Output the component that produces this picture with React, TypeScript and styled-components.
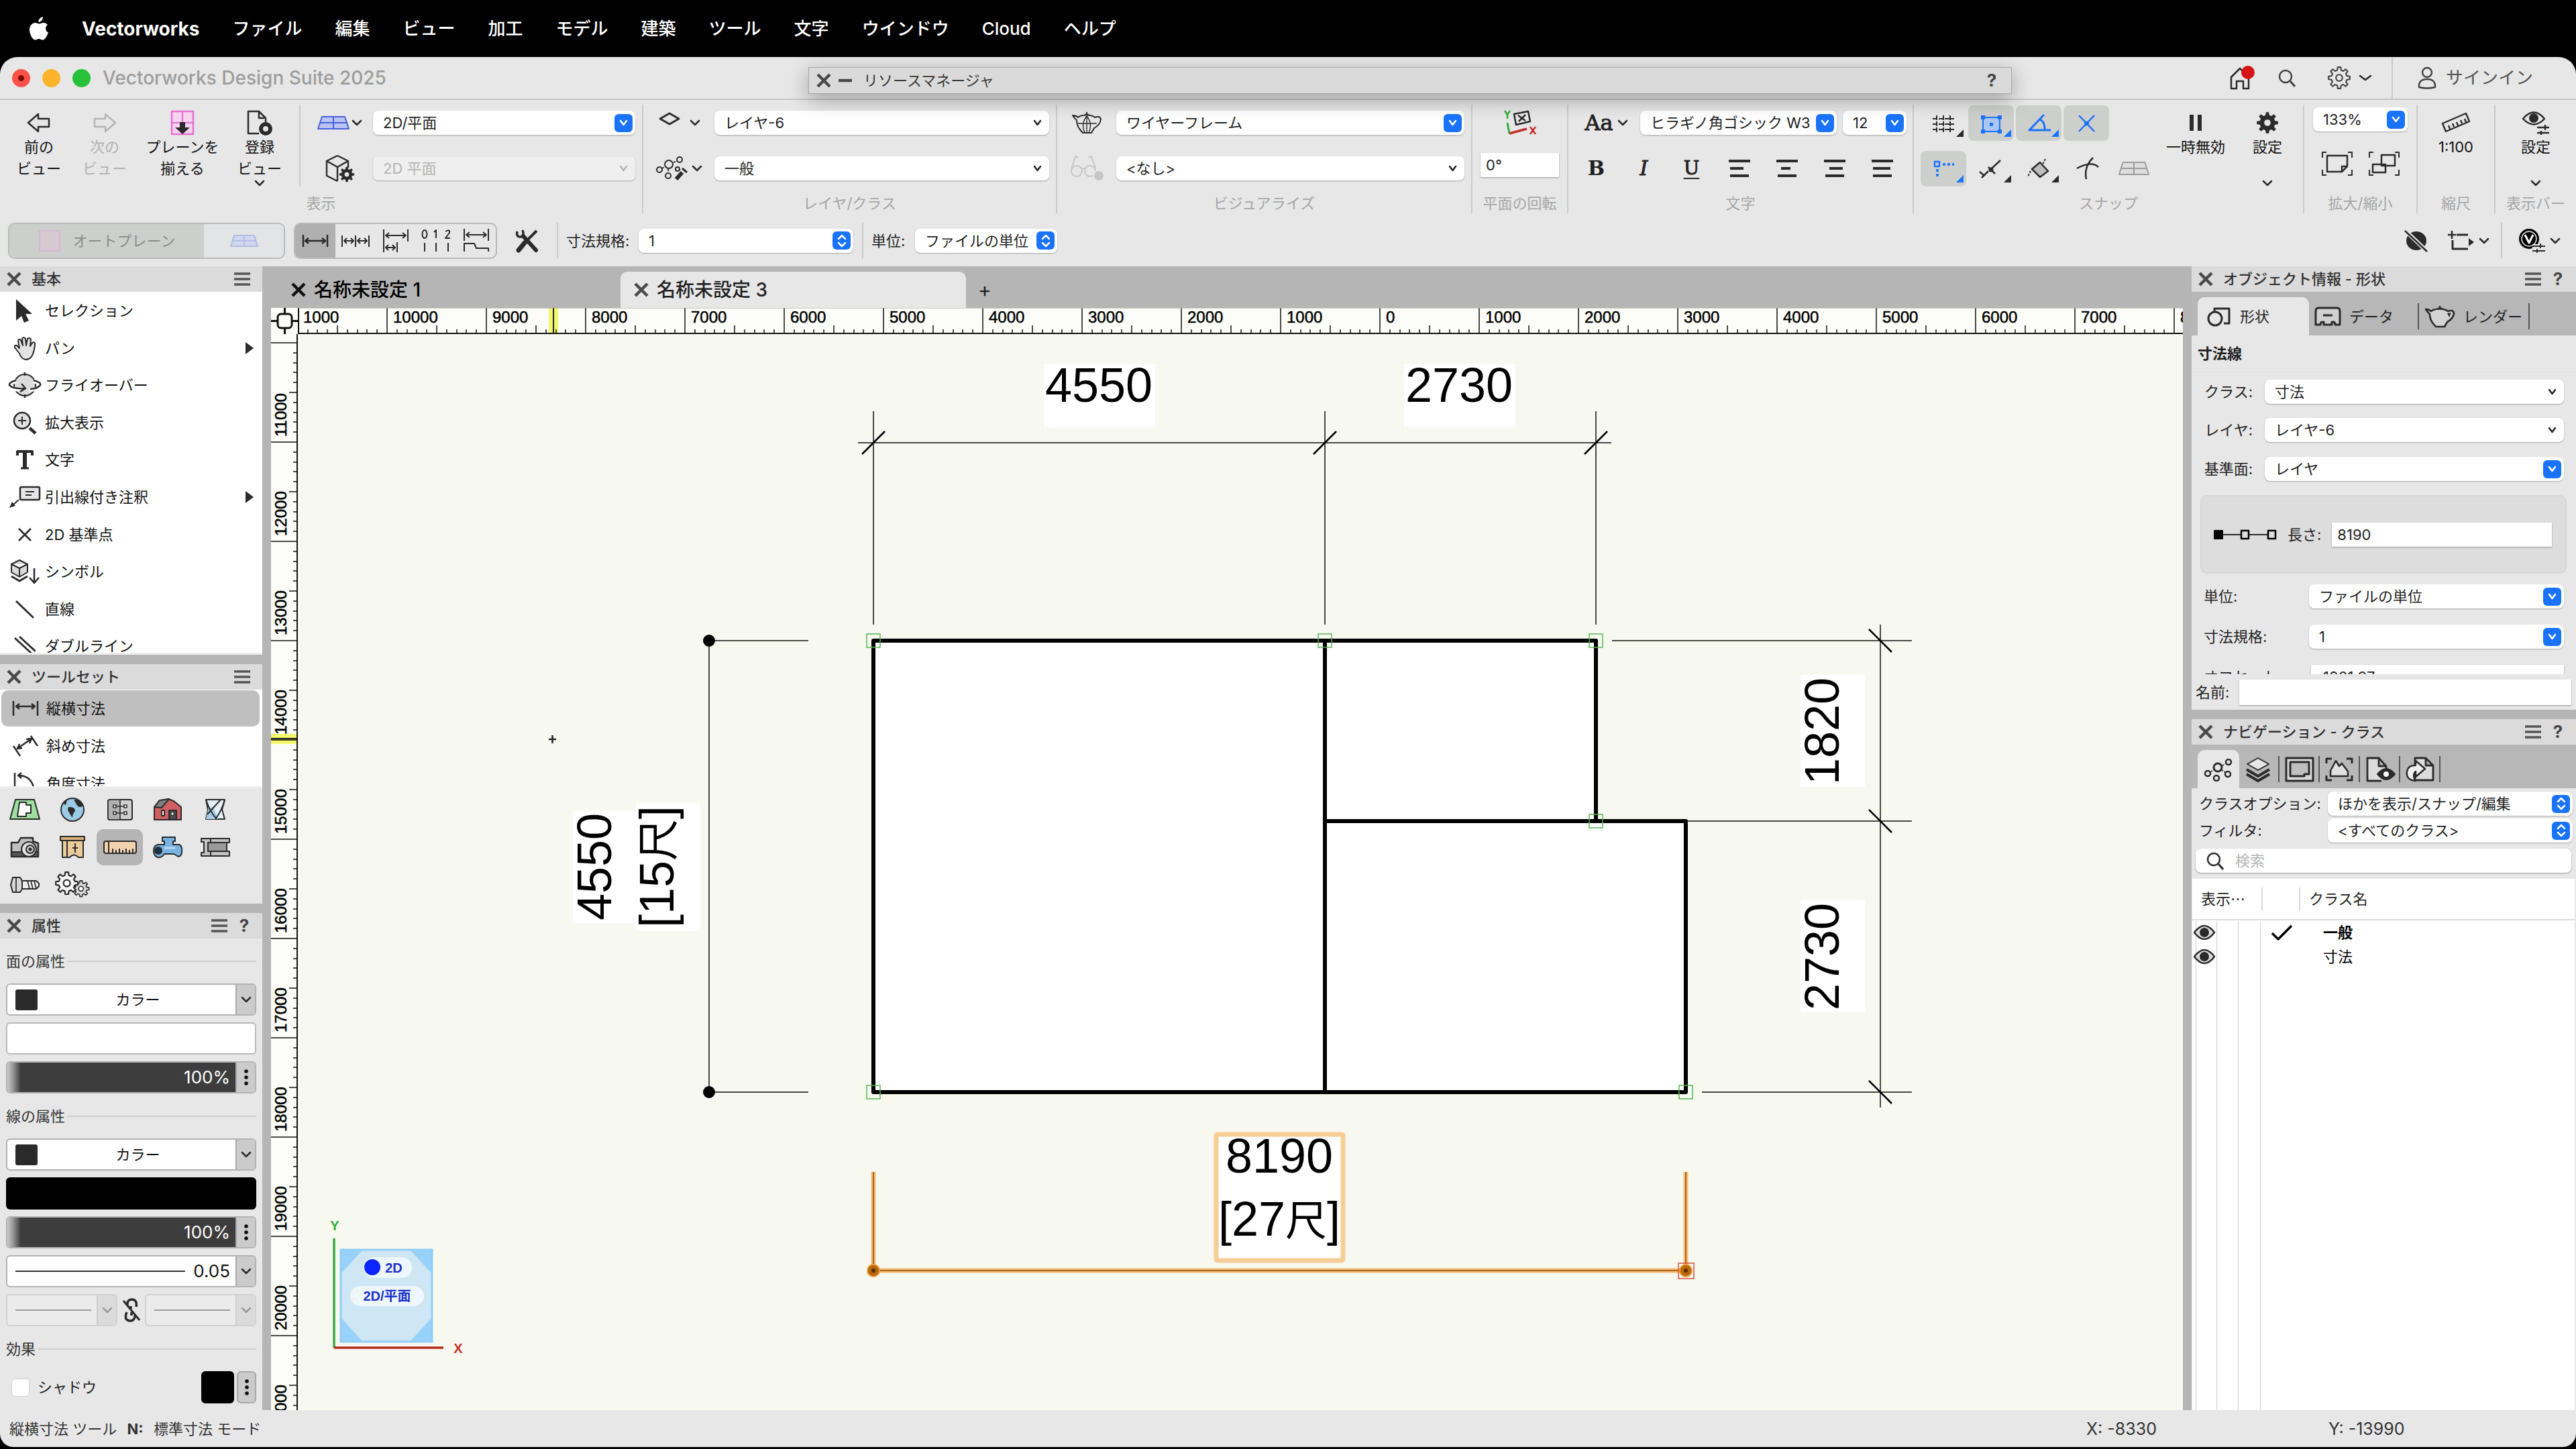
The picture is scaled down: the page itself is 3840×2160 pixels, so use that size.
import React from "react";
import styled, { createGlobalStyle, css } from "styled-components";

const INK = "#2b2b2b";
const BLUE = "#1a73ff";
const SANS = `Inter, "Noto Sans CJK JP", sans-serif`;

const Global = createGlobalStyle`
  *, *::before, *::after { box-sizing: border-box; }
  html, body, #root { height: 100%; }
  body { margin: 0; background: #000; font-family: ${SANS}; font-size: 22px; line-height: 32px; color: #1f1f1f; overflow: hidden; }
  button, input, select { font: inherit; color: inherit; margin: 0; padding: 0; border: 0; background: none; border-radius: 0; }
  ul, h2, h3 { margin: 0; padding: 0; list-style: none; font: inherit; }
`;

/* ---------- shared pieces ---------- */

const Svg = styled.svg`
  display: block;
  flex: none;
  fill: none;
  stroke: ${INK};
  stroke-width: 2;
  stroke-linejoin: round;
`;

type IcoProps = { w: number; h: number; children: React.ReactNode };
const Ico = ({ w, h, children }: IcoProps) => (
  <Svg width={w} height={h} viewBox={`0 0 ${w} ${h}`} aria-hidden="true">
    {children}
  </Svg>
);

const Chevron = ({ color = INK, w = 16 }: { color?: string; w?: number }) => (
  <Ico w={w} h={10}>
    <path d={`M2 2 L${w / 2} 8 L${w - 2} 2`} stroke={color} strokeWidth={2.5} strokeLinecap="round" />
  </Ico>
);

const CloseIcon = ({ color = "#4a4a4a" }: { color?: string }) => (
  <Ico w={22} h={22}>
    <path d="M2 2 L20 20 M20 2 L2 20" stroke={color} strokeWidth={4.5} />
  </Ico>
);

const MenuIcon = () => (
  <Ico w={24} h={22}>
    <path d="M0 3 H24 M0 11 H24 M0 19 H24" stroke="#555" strokeWidth={3.5} />
  </Ico>
);

const IconButton = styled.button<{ $w?: number; $tight?: boolean }>`
  display: flex;
  align-items: center;
  justify-content: center;
  gap: ${(p) => (p.$tight ? 2 : 6)}px;
  height: 100%;
  ${(p) => p.$tight && "padding-left: 8px;"}
  ${(p) => p.$w && `width: ${p.$w}px;`}
`;

type PickKind = "blue" | "updown" | "plain" | "off";

const PickBox = styled.span<{ $kind: PickKind; $w?: number }>`
  display: grid;
  align-items: center;
  ${(p) => (p.$w ? `flex: 0 0 ${p.$w}px;` : "flex: 1 1 0;")}
  min-width: 0;
  height: 36px;
  border-radius: 8px;
  background: ${(p) => (p.$kind === "off" ? "#eeefee" : "#fff")};
  color: ${(p) => (p.$kind === "off" ? "#b4b4b4" : "#1f1f1f")};
  box-shadow: 0 1px 2px rgba(0, 0, 0, 0.28);
  & > * { grid-area: 1 / 1; }
`;

const PickField = styled.select`
  appearance: none;
  width: 100%;
  height: 36px;
  padding: 0 32px 0 15px;
  opacity: 1;
  text-overflow: clip;
`;

const PickMark = styled.span<{ $blue: boolean }>`
  justify-self: end;
  display: flex;
  align-items: center;
  justify-content: center;
  width: 27px;
  height: 27px;
  margin-right: 4px;
  border-radius: 6px;
  background: ${(p) => (p.$blue ? BLUE : "transparent")};
  pointer-events: none;
`;

const Pick = ({ id, label, value, kind = "plain", w }: { id?: string; label?: string; value: string; kind?: PickKind; w?: number }) => (
  <PickBox $kind={kind} $w={w}>
    <PickField id={id} aria-label={label} disabled={kind === "off"} defaultValue={value}>
      <option>{value}</option>
    </PickField>
    <PickMark $blue={kind === "blue" || kind === "updown"}>
      {kind === "updown" ? (
        <Ico w={14} h={22}>
          <path d="M2 8 L7 3 L12 8 M2 14 L7 19 L12 14" stroke="#fff" strokeWidth={2.5} strokeLinecap="round" />
        </Ico>
      ) : (
        <Chevron w={13} color={kind === "blue" ? "#fff" : kind === "off" ? "#b4b4b4" : "#222"} />
      )}
    </PickMark>
  </PickBox>
);

/* ---------- macOS menu bar ---------- */

const MenuBar = styled.nav`
  flex: none;
  display: flex;
  align-items: center;
  gap: 49px;
  height: 85px;
  padding-left: 43px;
  color: #fff;
  font-size: 26px;
`;

const MenuItem = styled.button<{ $app?: boolean }>`
  font-weight: ${(p) => (p.$app ? 700 : 500)};
  white-space: nowrap;
  ${(p) => p.$app && "font-size: 28px;"}
`;

const MENUS = ["ファイル", "編集", "ビュー", "加工", "モデル", "建築", "ツール", "文字", "ウインドウ", "Cloud", "ヘルプ"];

const Apple = () => (
  <Ico w={30} h={36}>
    <path
      d="M21 0 C21 4 18 8 14.5 8 C14 4 17 1 21 0 Z M28 12 C24 14.500 24 21 29 23.500 C27.500 28 24 34.500 20.500 34.500 C18 34.500 17.500 33 15 33 C12.500 33 11.500 34.500 9.500 34.500 C5.500 34.500 1 26 1 19.500 C1 12.500 5.500 9 9.500 9 C12 9 13.500 10.500 15.500 10.500 C17.500 10.500 19 9 22 9 C24.500 9 26.500 10 28 12 Z"
      fill="#fff"
      stroke="none"
    />
  </Ico>
);

/* ---------- window ---------- */

const Screen = styled.div`
  display: flex;
  flex-direction: column;
  height: 100vh;
  padding-bottom: 3px;
`;

const Window = styled.div`
  position: relative;
  flex: 1;
  min-height: 0;
  display: flex;
  flex-direction: column;
  overflow: hidden;
  border-radius: 26px 26px 20px 20px;
  background: #e7e7e7;
`;

const TitleBar = styled.header`
  flex: none;
  display: flex;
  align-items: center;
  height: 64px;
  padding-left: 18px;
  border-bottom: 2px solid #c4c4c4;
`;

const Lights = styled.div`
  display: flex;
  gap: 18px;
`;

const Light = styled.button<{ $c: string }>`
  display: grid;
  place-items: center;
  width: 27px;
  height: 27px;
  border-radius: 50%;
  background: ${(p) => p.$c};
  &:first-child::after {
    content: "";
    width: 9px;
    height: 9px;
    border-radius: 50%;
    background: #7c0a05;
  }
`;

const AppTitle = styled.span`
  flex: 1;
  margin-left: 18px;
  font-size: 28px;
  font-weight: 500;
  color: #9d9d9d;
`;

const TitleTools = styled.div`
  display: flex;
  align-items: center;
  height: 62px;
`;

const SignIn = styled.button`
  display: flex;
  align-items: center;
  gap: 14px;
  width: 275px;
  height: 62px;
  padding-left: 37px;
  border-left: 2px solid #cacaca;
  font-size: 26px;
  color: #555;
`;

const Floating = styled.section`
  position: absolute;
  top: 15px;
  left: 1205px;
  right: 841px;
  display: flex;
  align-items: center;
  gap: 11px;
  height: 40px;
  padding: 0 20px 0 11px;
  background: #dadada;
  border: 1px solid #a8a8a8;
  box-shadow: 0 8px 30px rgba(0, 0, 0, 0.32);
  color: #3a3a3a;
`;

const FloatingTitle = styled.h2`
  flex: 1;
  margin-left: 6px;
`;

const Help = styled.button`
  width: 18px;
  font-size: 26px;
  font-weight: 700;
  color: #454545;
`;

/* ---------- toolbar ---------- */

const Toolbar = styled.div`
  flex: none;
  display: flex;
  padding: 7px 0;
`;

const Section = styled.section<{ $basis: number; $grow?: boolean }>`
  display: flex;
  flex-direction: column;
  flex: ${(p) => (p.$grow ? 1 : 0)} 0 ${(p) => p.$basis}px;
  height: 162px;
  border-right: 2px solid #cbcbcb;
  &:last-child { border-right: 0; }
`;

const SectionBody = styled.div`
  flex: none;
  display: flex;
  height: 122px;
`;

const SectionLabel = styled.h2`
  margin-top: 10px;
  height: 30px;
  line-height: 30px;
  text-align: center;
  color: #a6a6a6;
  white-space: nowrap;
`;

const TallGroup = styled.div`
  display: flex;
  padding: 0 12px 0 8px;
  border-right: 2px solid #cbcbcb;
`;

const Tall = styled.button<{ $w?: number; $dim?: boolean }>`
  display: flex;
  flex-direction: column;
  align-items: center;
  ${(p) => (p.$w ? `width: ${p.$w}px;` : "flex: 1;")}
  height: 122px;
  white-space: pre-line;
  color: ${(p) => (p.$dim ? "#b0b0b0" : "#111")};
`;

const TallIcon = styled.span`
  display: flex;
  align-items: center;
  height: 47px;
  padding-top: 7px;
`;

const TallFoot = styled.span`
  margin-top: auto;
`;

const Rows = styled.div<{ $tight?: boolean; $pad?: string }>`
  flex: 1;
  min-width: 0;
  display: grid;
  grid-template-rows: ${(p) => (p.$tight ? "44px 68px" : "54px 54px")};
  align-content: space-between;
  padding: ${(p) => p.$pad || "0 10px 0 0"};
`;

const Row = styled.div<{ $gap?: number; $top?: boolean; $center?: boolean }>`
  display: flex;
  align-items: ${(p) => (p.$top ? "flex-start" : "center")};
  ${(p) => p.$top && "padding-top: 4px;"}
  ${(p) => p.$center && "justify-content: center;"}
  gap: ${(p) => p.$gap || 0}px;
  min-width: 0;
`;

const FontRow = styled.div`
  flex: 1;
  display: flex;
  gap: 9px;
  min-width: 0;
`;

const SnapButton = styled.button<{ $on?: boolean }>`
  display: grid;
  place-items: center;
  width: 68px;
  height: 53px;
  border-radius: 8px;
  background: ${(p) => (p.$on ? "#cdcfcd" : "transparent")};
`;

const Glyph = styled.span<{ $style?: "i" | "u" | "aa" }>`
  font-family: "DejaVu Serif", serif;
  font-size: ${(p) => (p.$style === "aa" ? 32 : 30)}px;
  font-weight: ${(p) => (p.$style ? 400 : 700)};
  font-style: ${(p) => (p.$style === "i" ? "italic" : "normal")};
  ${(p) => p.$style === "aa" && `-webkit-text-stroke: 1px ${INK};`}
  ${(p) => p.$style === "i" && `-webkit-text-stroke: 1px ${INK};`}
  ${(p) => p.$style === "u" && `text-decoration: underline; text-underline-offset: 5px; font-size: 28px; -webkit-text-stroke: 1px ${INK};`}
`;

const PlainInput = styled.input<{ $h?: number }>`
  flex: 1;
  min-width: 0;
  height: ${(p) => p.$h || 36}px;
  padding: 0 8px;
  background: #fff;
  box-shadow: 0 1px 2px rgba(0, 0, 0, 0.35);
`;

const Corner = ({ c = INK }: { c?: string }) => <path d="M64 36 V47 H53 Z" fill={c} stroke="none" />;

const PlaneGrid = ({ c, f, w = 50, h = 22 }: { c: string; f: string; w?: number; h?: number }) => (
  <Ico w={w} h={h}>
    <path d={`M${w * 0.16} 2 H${w * 0.84} L${w - 2} ${h - 2} H2 Z`} fill={f} stroke={c} />
    <path d={`M${w / 2} 2 V${h - 2} M${w * 0.09} ${h / 2} H${w * 0.91}`} stroke={c} />
  </Ico>
);

const gearPoints = () => {
  const pts: string[] = [];
  for (let i = 0; i < 8; i++) {
    [[-14, 11], [-8, 15], [8, 15], [14, 11]].forEach(([da, r]) => {
      const a = ((i * 45 + da) * Math.PI) / 180;
      pts.push(`${(16 + r * Math.cos(a)).toFixed(1)},${(16 + r * Math.sin(a)).toFixed(1)}`);
    });
  }
  return pts.join(" ");
};
const GEAR = gearPoints();

const GearShape = ({ fill = INK, hole = "#e7e7e7", stroke = "none" }: { fill?: string; hole?: string; stroke?: string }) => (
  <>
    <polygon points={GEAR} fill={fill} stroke={stroke} />
    <circle cx="16" cy="16" r="4.5" fill={hole} stroke={stroke} />
  </>
);

const Gear = ({ s = 34, ...rest }: { s?: number; fill?: string; hole?: string; stroke?: string }) => (
  <Svg width={s} height={s} viewBox="0 0 32 32" aria-hidden="true"><GearShape {...rest} /></Svg>
);

const POT = "M2 6 Q7 6 10 9 L13 7 Q22 4 32 7 L35 9 Q43 6 44 12 Q43 20 34 25 L30 32 H17 L12 26 Q8 20 8 13 Q5 11 2 6 Z M19 6 Q23 3 28 6 M23 1 V5";

const Teapot = () => (
  <Ico w={46} h={34}>
    <path d={POT} fill="#d4d4d4" strokeWidth={2.6} />
    <path d="M34 12 L40 11 L37 18 Z" fill={INK} stroke="none" />
  </Ico>
);

const WireTeapot = () => (
  <Ico w={46} h={34}>
    <path d={POT} />
    <path d="M23 7 Q14 18 20 32 M23 7 Q32 18 26 32 M10 18 H38 M23 7 V32" strokeWidth={1.4} />
  </Ico>
);

const ALIGN_MID = ["M2 14 H22", "M7 14 H21", "M8 14 H28", "M2 14 H28"];

const AlignIcon = ({ k }: { k: number }) => (
  <Ico w={32} h={28}>
    <path d={`M0 3 H32 ${ALIGN_MID[k]} M2 25 H30`} strokeWidth={4} />
  </Ico>
);

const ToolbarView = () => (
  <Toolbar>
    <Section $basis={959} $grow>
      <SectionBody>
        <TallGroup>
          <Tall $w={100}>
            <TallIcon>
              <Ico w={36} h={30}><path d="M17 2 L2 15 L17 28 V21 H33 V9 H17 Z" strokeWidth={2.5} /></Ico>
            </TallIcon>
            {"前の\nビュー"}
          </Tall>
          <Tall $w={96} $dim>
            <TallIcon>
              <Ico w={36} h={30}><path d="M19 2 L34 15 L19 28 V21 H3 V9 H19 Z" stroke="#b5b5b5" strokeWidth={2.5} /></Ico>
            </TallIcon>
            {"次の\nビュー"}
          </Tall>
          <Tall $w={136}>
            <TallIcon>
              <Ico w={36} h={38}>
                <rect x="2" y="2" width="32" height="34" fill="#f6d3f0" stroke="#e86fd3" strokeWidth={2.5} />
                <path d="M18 2 V20 M2 19 H34" stroke="#e86fd3" />
                <path d="M14 18 H22 V26 H29 L18 36 L7 26 H14 Z" fill={INK} stroke="none" />
              </Ico>
            </TallIcon>
            {"プレーンを\n揃える"}
          </Tall>
          <Tall $w={94}>
            <TallIcon>
              <Ico w={42} h={38}>
                <path d="M20 35 H4 V2 H20 L30 12 V20 M20 2 V12 H28" strokeWidth={2.5} />
                <circle cx="30" cy="28" r="7" strokeWidth={6} />
              </Ico>
            </TallIcon>
            {"登録\nビュー"}
            <TallFoot><Chevron /></TallFoot>
          </Tall>
        </TallGroup>
        <Rows>
          <Row>
            <IconButton $w={108} $tight aria-label="プレーン">
              <PlaneGrid c="#4a5fd8" f="#b9c3f5" />
              <Chevron />
            </IconButton>
            <Pick label="ビュー" value="2D/平面" kind="blue" />
          </Row>
          <Row>
            <IconButton $w={108} $tight aria-label="ビュー設定">
              <Ico w={46} h={42}>
                <path d="M20 2 L36 10 V20 M20 2 L4 10 V32 L20 40 M4 10 L20 19 L36 10 M20 19 V40" strokeWidth={2.4} />
                <g transform="translate(22 18) scale(0.75)"><GearShape /></g>
              </Ico>
            </IconButton>
            <Pick label="投影" value="2D 平面" kind="off" />
          </Row>
        </Rows>
      </SectionBody>
      <SectionLabel>表示</SectionLabel>
    </Section>

    <Section $basis={617} $grow>
      <SectionBody>
        <Rows>
          <Row>
            <IconButton $w={106} aria-label="レイヤ">
              <Ico w={42} h={34}><path d="M18 3 L32 11 L18 19 L4 11 Z" strokeWidth={2.8} /></Ico>
              <Chevron />
            </IconButton>
            <Pick label="レイヤ" value="レイヤ-6" />
          </Row>
          <Row>
            <IconButton $w={106} aria-label="クラス">
              <Ico w={48} h={38}>
                <circle cx="20" cy="13" r="6" /><circle cx="36" cy="6" r="4" />
                <circle cx="6" cy="21" r="4" /><circle cx="19" cy="30" r="4" />
                <path d="M31 35 L40 25" strokeWidth={6} />
                <path d="M40 19 L47 25" strokeWidth={3} />
                <circle cx="33" cy="20" r="3" />
                <path d="M27 10 L32 8 M10 19 L14 16 M19 20 V25" strokeDasharray="3 2" />
              </Ico>
              <Chevron />
            </IconButton>
            <Pick label="クラス" value="一般" />
          </Row>
        </Rows>
      </SectionBody>
      <SectionLabel>レイヤ/クラス</SectionLabel>
    </Section>

    <Section $basis={619} $grow>
      <SectionBody>
        <Rows>
          <Row>
            <IconButton $w={88} aria-label="レンダリング"><WireTeapot /></IconButton>
            <Pick label="レンダリング" value="ワイヤーフレーム" kind="blue" />
          </Row>
          <Row>
            <IconButton $w={88} aria-label="データビジュアライズ">
              <Ico w={50} h={40}>
                <g stroke="#c6c6c6">
                  <circle cx="10" cy="24" r="8" /><circle cx="30" cy="24" r="8" />
                  <path d="M2 22 L8 2 L12 4 M38 20 L32 2 L28 4 M18 20 H22" />
                </g>
                <circle cx="43" cy="31" r="8" fill="#c6c6c6" stroke="#e7e7e7" />
              </Ico>
            </IconButton>
            <Pick label="データの可視化" value="<なし>" />
          </Row>
        </Rows>
      </SectionBody>
      <SectionLabel>ビジュアライズ</SectionLabel>
    </Section>

    <Section $basis={143}>
      <SectionBody>
        <Rows $pad="0 12px">
          <Row $center>
            <Ico w={52} h={40}>
              <path d="M3 2 L7 8 L11 2 M7 8 V14" stroke="#2faf38" strokeWidth={2.5} />
              <path d="M7 20 L10 36" stroke="#2faf38" strokeWidth={3} />
              <path d="M10 36 L36 29" stroke="#c4302b" strokeWidth={3.5} />
              <path d="M41 26 L49 37 M49 26 L41 37" stroke="#c4302b" strokeWidth={2.5} />
              <path d="M17 7 L38 3 L41 18 L20 23 Z M23 9 L34 17 M34 8 L24 18" strokeWidth={2.5} />
            </Ico>
          </Row>
          <Row $top><PlainInput aria-label="回転角度" defaultValue="0°" /></Row>
        </Rows>
      </SectionBody>
      <SectionLabel>平面の回転</SectionLabel>
    </Section>

    <Section $basis={515} $grow>
      <SectionBody>
        <Rows $pad="0 9px 0 6px">
          <Row>
            <IconButton $w={101} aria-label="文字スタイル"><Glyph $style="aa">Aa</Glyph><Chevron /></IconButton>
            <FontRow>
              <Pick label="フォント" value="ヒラギノ角ゴシック W3" kind="blue" />
              <Pick label="サイズ" value="12" kind="blue" w={95} />
            </FontRow>
          </Row>
          <Row>
            <IconButton $w={71} aria-label="太字"><Glyph>B</Glyph></IconButton>
            <IconButton $w={71} aria-label="斜体"><Glyph $style="i">I</Glyph></IconButton>
            <IconButton $w={71} aria-label="下線"><Glyph $style="u">U</Glyph></IconButton>
            {["左揃え", "中央揃え", "右揃え", "両端揃え"].map((name, k) => (
              <IconButton key={name} $w={71} aria-label={name}><AlignIcon k={k} /></IconButton>
            ))}
          </Row>
        </Rows>
      </SectionBody>
      <SectionLabel>文字</SectionLabel>
    </Section>

    <Section $basis={582}>
      <SectionBody>
        <Rows $pad="0 0 0 10px">
          <Row $gap={3}>
            <SnapButton aria-label="グリッド">
              <Ico w={68} h={53}>
                <path d="M24 15 V40 M34 15 V40 M44 15 V40 M18 20 H50 M18 28 H50 M18 36 H50" strokeDasharray="7 2" />
                <Corner />
              </Ico>
            </SnapButton>
            <SnapButton $on aria-label="図形">
              <Ico w={68} h={53}>
                <rect x="22" y="18" width="25" height="21" fill="#a9c6f5" stroke={BLUE} />
                <path d="M19 15 h6 v6 h-6z M44 15 h6 v6 h-6z M19 36 h6 v6 h-6z M44 36 h6 v6 h-6z M32 26 h5 v5 h-5z" fill={BLUE} stroke="none" />
                <Corner c={BLUE} />
              </Ico>
            </SnapButton>
            <SnapButton $on aria-label="角度">
              <Ico w={68} h={53}><path d="M42 14 L20 37 H52 M36 21 Q44 26 43 37" stroke={BLUE} strokeWidth={3} /><Corner c={BLUE} /></Ico>
            </SnapButton>
            <SnapButton $on aria-label="交点">
              <Ico w={68} h={53}><path d="M23 15 L46 39 M46 15 L23 39" stroke={BLUE} strokeWidth={2.5} /><circle cx="34.500" cy="27" r="3.500" fill={BLUE} stroke="none" /></Ico>
            </SnapButton>
          </Row>
          <Row $gap={3}>
            <SnapButton $on aria-label="スマートポイント">
              <Ico w={68} h={53}>
                <rect x="21" y="16" width="7" height="7" stroke={BLUE} strokeWidth={2.5} />
                <path d="M33 20 H50 M25 27 V40" stroke={BLUE} strokeWidth={3.5} strokeDasharray="4 3" /><Corner c={BLUE} />
              </Ico>
            </SnapButton>
            <SnapButton aria-label="距離">
              <Ico w={68} h={53}><path d="M48 14 L35 26 M30 30 L20 40 M17 31 L24 37 M30 24 L40 34" strokeWidth={2.5} /><circle cx="34" cy="28" r="2.500" fill={INK} /><Corner /></Ico>
            </SnapButton>
            <SnapButton aria-label="エッジ">
              <Ico w={68} h={53}><path d="M36 17 L48 30 L36 39 L24 27 Z" fill="#bdbdbd" strokeWidth={2.5} /><path d="M44 12 L40 20 M22 30 L18 38" strokeDasharray="3 2" /><Corner /></Ico>
            </SnapButton>
            <SnapButton aria-label="接線">
              <Ico w={68} h={53}><path d="M20 26 Q42 14 52 24 M44 10 Q30 24 34 42" strokeWidth={2.5} /></Ico>
            </SnapButton>
            <SnapButton aria-label="作業平面"><PlaneGrid c="#9c9c9c" f="#dedede" w={48} h={22} /></SnapButton>
          </Row>
        </Rows>
        <Tall $w={108}>
          <TallIcon><Ico w={22} h={26}><path d="M5 1 V25 M17 1 V25" strokeWidth={6} /></Ico></TallIcon>
          一時無効
        </Tall>
        <Tall $w={106}>
          <TallIcon><Gear /></TallIcon>
          設定
          <TallFoot><Chevron /></TallFoot>
        </Tall>
      </SectionBody>
      <SectionLabel>スナップ</SectionLabel>
    </Section>

    <Section $basis={169}>
      <SectionBody>
        <Rows $tight $pad="0 13px">
          <Row><Pick label="表示倍率" value="133%" kind="blue" /></Row>
          <Row $center $gap={22}>
            <Ico w={48} h={38}>
              <path d="M8 2 H2 V10 M40 2 H46 V10 M8 36 H2 V28 M40 36 H46 V28" />
              <path d="M9 7 H39 V23 L31 31 H9 Z M39 23 H31 V31" strokeWidth={2.5} />
            </Ico>
            <Ico w={48} h={38}>
              <path d="M8 2 H2 V10 M40 2 H46 V10 M8 36 H2 V28 M40 36 H46 V28" />
              <path d="M20 6 H40 V22 H20 Z M7 20 H26 V32 H7 Z" strokeWidth={2.5} fill="#e7e7e7" />
            </Ico>
          </Row>
        </Rows>
      </SectionBody>
      <SectionLabel>拡大/縮小</SectionLabel>
    </Section>

    <Section $basis={116}>
      <SectionBody>
        <Tall>
          <TallIcon>
            <Ico w={44} h={32}><path d="M2 17 L37 2 L42 14 L7 29 Z M13 25 L11 20 M19 22 L17 17 M25 20 L23 15 M31 17 L29 12 M37 15 L35 10" strokeWidth={2.4} /></Ico>
          </TallIcon>
          1:100
        </Tall>
      </SectionBody>
      <SectionLabel>縮尺</SectionLabel>
    </Section>

    <Section $basis={120}>
      <SectionBody>
        <Tall>
          <TallIcon>
            <Ico w={44} h={38}>
              <path d="M3 13 Q19 -6 35 13 Q19 30 3 13 Z" strokeWidth={2.5} />
              <circle cx="19" cy="12" r="6" fill={INK} />
              <path d="M24 26 H42 M24 34 H42 M36 22 V30 M30 31 V37" strokeWidth={2.5} />
            </Ico>
          </TallIcon>
          設定
          <TallFoot><Chevron /></TallFoot>
        </Tall>
      </SectionBody>
      <SectionLabel>表示バー</SectionLabel>
    </Section>
  </Toolbar>
);

/* ---------- mode bar ---------- */

const ModeBar = styled.div`
  flex: none;
  display: flex;
  align-items: center;
  height: 72px;
  padding: 0 12px 5px 12px;
  color: #222;
`;

const Segments = styled.div`
  display: flex;
  height: 54px;
  margin-right: 13px;
  border: 2px solid #b9b9b9;
  border-radius: 10px;
  overflow: hidden;
`;

const Segment = styled.button<{ $w: number; $bg?: string }>`
  display: flex;
  align-items: center;
  justify-content: center;
  gap: 18px;
  width: ${(p) => p.$w}px;
  background: ${(p) => p.$bg || "transparent"};
  color: #8b8d8b;
`;

const Rule = styled.span`
  width: 2px;
  height: 54px;
  margin: 0 12px 0 13px;
  background: #cbcbcb;
`;

const ModeField = styled.label<{ $w: number }>`
  flex: none;
  width: ${(p) => p.$w}px;
`;

const Spacer = styled.span`
  flex: 1;
`;

const arrow = (x1: number, x2: number, y: number) =>
  `M${x1} ${y - 9} V${y + 9} M${x2} ${y - 9} V${y + 9} M${x1 + 4} ${y} H${x2 - 4} M${x1 + 8} ${y - 4} L${x1 + 3} ${y} L${x1 + 8} ${y + 4} M${x2 - 8} ${y - 4} L${x2 - 3} ${y} L${x2 - 8} ${y + 4}`;

const ModeBarView = () => (
  <ModeBar>
    <Segments>
      <Segment $w={290} $bg="#cdcfcc">
        <Ico w={34} h={34}><rect x="2" y="2" width="30" height="30" fill="#d6c9d2" stroke="#d9b6d2" /></Ico>
        オートプレーン
      </Segment>
      <Segment $w={119} $bg="#e3e4e5" aria-label="作業平面"><PlaneGrid c="#b3bbe8" f="#d3d8ee" w={44} h={20} /></Segment>
    </Segments>
    <Segments>
      <Segment $w={60} $bg="#b0b0b0" aria-label="標準寸法"><Ico w={42} h={36}><path d={arrow(3, 39, 18)} strokeWidth={2.5} /></Ico></Segment>
      <Segment $w={60} aria-label="連続寸法">
        <Ico w={44} h={36}><path d="M2 10 V27 M22 10 V27 M42 10 V27 M5 18 H19 M25 18 H39 M9 14 L5 18 L9 22 M15 14 L19 18 L15 22 M29 14 L25 18 L29 22 M35 14 L39 18 L35 22" /></Ico>
      </Segment>
      <Segment $w={60} aria-label="並列寸法">
        <Ico w={42} h={36}><path d={arrow(3, 39, 10) + "M3 11 V35 M23 20 V35 M6 28 H20 M10 24 L6 28 L10 32 M16 24 L20 28 L16 32"} /></Ico>
      </Segment>
      <Segment $w={60} aria-label="累進寸法">
        <Ico w={46} h={36}>
          <ellipse cx="6" cy="8" rx="3.500" ry="6" /><path d="M20 5 L23 2 V14 M37 4 Q44 0 43 6 L37 14 H44 M6 21 V34 M23 21 V34 M41 21 V34" />
        </Ico>
      </Segment>
      <Segment $w={59} aria-label="選択図形寸法"><Ico w={42} h={36}><path d={arrow(3, 39, 9) + "M3 34 V22 H18 L21 29 H39 V34"} /></Ico></Segment>
    </Segments>
    <IconButton $w={63} aria-label="環境設定">
      <Ico w={38} h={36}>
        <path d="M33 3 L18 18" strokeWidth={4} /><path d="M15 21 L6 32" strokeWidth={7} strokeLinecap="round" />
        <path d="M13 11 L32 32" strokeWidth={6} strokeLinecap="round" /><path d="M4 4 Q2 13 10 12 Q15 10 12 2" strokeWidth={3.5} />
      </Ico>
    </IconButton>
    <Rule />
    <ModeField $w={108} htmlFor="mode-standard">寸法規格:</ModeField>
    <Pick id="mode-standard" value="1" kind="updown" w={320} />
    <Rule />
    <ModeField $w={65} htmlFor="mode-unit">単位:</ModeField>
    <Pick id="mode-unit" value="ファイルの単位" kind="updown" w={212} />
    <Spacer />
    <IconButton $w={84} aria-label="非表示">
      <Ico w={38} h={34}>
        <ellipse cx="20" cy="17" rx="14" ry="13" fill={INK} /><path d="M4 2 L35 32" stroke="#e7e7e7" strokeWidth={6} /><path d="M3 2 L36 33" strokeWidth={2.5} />
      </Ico>
    </IconButton>
    <IconButton $w={72} aria-label="図形を追加">
      <Ico w={42} h={34}><path d="M2 8 H14 M8 2 V14" strokeWidth={2.5} /><path d="M15 8 H32 M9 16 V29 H32" strokeWidth={3} /><path d="M33 13 L41 19 L33 25 Z" fill={INK} stroke="none" /></Ico>
      <Chevron />
    </IconButton>
    <Rule />
    <IconButton $w={86} aria-label="Vectorworks 設定">
      <Ico w={42} h={40}>
        <circle cx="17" cy="17" r="14" fill="#000" stroke="#000" /><circle cx="17" cy="17" r="11" stroke="#e7e7e7" strokeWidth={1.5} />
        <path d="M11 11 L17 23 L23 11" stroke="#fff" strokeWidth={3} />
        <path d="M22 28 H41 M22 35 H41" stroke="#e7e7e7" strokeWidth={6} /><path d="M22 28 H41 M22 35 H41 M34 24 V31 M29 32 V38" />
      </Ico>
      <Chevron />
    </IconButton>
  </ModeBar>
);

/* ---------- palettes ---------- */

const Workspace = styled.main`
  flex: 1;
  min-height: 0;
  display: grid;
  grid-template-columns: 391px minmax(0, 1fr) 573px;
  column-gap: 13px;
  background: #b5b5b5;
`;

const Column = styled.aside`
  display: flex;
  flex-direction: column;
  gap: 14px;
  min-height: 0;
`;

const Palette = styled.section<{ $fill?: boolean }>`
  display: flex;
  flex-direction: column;
  ${(p) => (p.$fill ? "flex: 1; min-height: 0;" : "flex: none;")}
  background: #e7e7e7;
`;

const PaletteHead = styled.header`
  flex: none;
  display: flex;
  align-items: center;
  height: 38px;
  padding: 0 18px 0 10px;
  background: #dbdbdb;
  color: #333;
`;

const PaletteTitle = styled.h2`
  flex: 1;
  padding-left: 15px;
  font-weight: 500;
`;

const HeadTools = styled.div`
  display: flex;
  align-items: center;
  gap: 16px;
`;

const Head = ({ title, help }: { title: string; help?: boolean }) => (
  <PaletteHead>
    <IconButton aria-label="閉じる"><CloseIcon /></IconButton>
    <PaletteTitle>{title}</PaletteTitle>
    <HeadTools>
      <IconButton aria-label="メニュー"><MenuIcon /></IconButton>
      {help && <Help>?</Help>}
    </HeadTools>
  </PaletteHead>
);

const ToolClip = styled.div<{ $h: number }>`
  height: ${(p) => p.$h}px;
  overflow: hidden;
  padding: 1px 4px 0 2px;
  background: #fff;
  border-bottom: 3px solid #eeeeee;
`;

const ToolList = styled.ul<{ $n: number; $h: number }>`
  display: grid;
  grid-template-rows: repeat(${(p) => p.$n}, 1fr);
  height: ${(p) => p.$h}px;
`;

const ToolButton = styled.button<{ $on?: boolean; $lead?: number }>`
  display: grid;
  grid-template-columns: ${(p) => p.$lead || 65}px 1fr 22px;
  align-items: center;
  width: 100%;
  height: 54px;
  border-radius: 10px;
  text-align: left;
  color: #111;
  background: ${(p) => (p.$on ? "#bfbfbf" : "transparent")};
`;

const IconCell = styled.span`
  display: flex;
  justify-content: center;
  padding-left: 4px;
`;

const Tri = () => <Ico w={14} h={22}><path d="M1 2 V20 L13 11 Z" fill={INK} stroke="none" /></Ico>;

const BASIC: { name: string; more?: boolean; icon: React.ReactNode }[] = [
  { name: "セレクション", icon: <Ico w={34} h={36}><path d="M4 1 L28 23 H18 L23 33 L16 36 L12 26 L4 33 Z" fill={INK} stroke="none" /></Ico> },
  { name: "パン", more: true, icon: (
    <Ico w={34} h={36}><path d="M9 26 L2 17 Q1 13 5 14 L9 18 L7 7 Q8 3 11 6 L14 14 L13 4 Q15 0 18 4 L19 14 L21 4 Q24 1 26 5 L25 15 L28 10 Q31 8 32 11 Q32 20 28 29 Q25 35 18 35 Q12 34 9 26 Z" fill="#e3e3e3" /></Ico>) },
  { name: "フライオーバー", icon: (
    <Ico w={50} h={38}><circle cx="25" cy="19" r="16" fill="#dcdcdc" /><path d="M12 13 Q1 16 2 20 Q6 27 24 25 M38 13 Q50 16 48 20 Q45 26 32 26" stroke="#fff" strokeWidth={6} /><path d="M12 12 Q1 15 2 19 Q6 25 25 24 M38 12 Q50 15 48 19 Q45 24 33 25 M20 17 L26 24 L18 29 M25 0 V5 M25 33 V38" strokeWidth={2.5} /></Ico>) },
  { name: "拡大表示", icon: (
    <Ico w={36} h={36}><circle cx="14" cy="15" r="12" fill="#e0e0e0" strokeWidth={2.5} /><path d="M8 15 H20 M14 9 V21" strokeWidth={2} /><path d="M25 26 L34 34" strokeWidth={4.5} /></Ico>) },
  { name: "文字", icon: <Ico w={28} h={30}><path d="M3 9 V3 H25 V9" strokeWidth={4} /><path d="M14 3 V28" strokeWidth={6} /><path d="M8 28 H20" strokeWidth={3} /></Ico> },
  { name: "引出線付き注釈", more: true, icon: (
    <Ico w={48} h={34}><rect x="17" y="2" width="29" height="19" rx="2" fill="#e6e6e6" strokeWidth={2.5} /><path d="M25 9 H38 M25 14 H34 M15 21 L5 30" /><path d="M1 33 L5 24 L10 30 Z" fill={INK} stroke="none" /></Ico>) },
  { name: "2D 基準点", icon: <Ico w={22} h={20}><path d="M2 1 L20 19 M20 1 L2 19" strokeWidth={2.5} /></Ico> },
  { name: "シンボル", icon: (
    <Ico w={44} h={38}><path d="M14 2 L26 8 V20 L14 27 L2 20 V8 Z M2 8 L14 14 L26 8 M14 14 V27" fill="#dadada" /><path d="M2 26 L14 33 L26 26" strokeWidth={3} /><path d="M36 14 V35 M29 28 L36 36 L43 28" strokeWidth={2.5} /></Ico>) },
  { name: "直線", icon: <Ico w={30} h={28}><path d="M2 2 L28 27" strokeWidth={2.8} /></Ico> },
  { name: "ダブルライン", icon: <Ico w={32} h={32}><path d="M1 4 L26 27 M8 2 L32 24" strokeWidth={2.8} /></Ico> },
];

const DIMS: { name: string; icon: React.ReactNode }[] = [
  { name: "縦横寸法", icon: <Ico w={40} h={24}><path d="M2 1 V23 M38 1 V23 M6 9 H34 M11 5 L6 9 L11 13 M29 5 L34 9 L29 13" strokeWidth={2.5} /></Ico> },
  { name: "斜め寸法", icon: <Ico w={40} h={36}><path d="M2 18 L12 33 M28 3 L38 18 M9 21 L28 8 M15 21 L8 22 L11 15 M21 8 L29 7 L26 14" strokeWidth={2.5} /></Ico> },
  { name: "角度寸法", icon: <Ico w={38} h={40}><path d="M3 4 V36 H36 M8 8 Q30 8 32 32 M13 4 L8 8 L13 12" strokeWidth={2.5} /></Ico> },
];

const Toolsets = styled.div`
  display: grid;
  grid-template-columns: repeat(5, 71px);
  grid-auto-rows: 56px;
  height: 172px;
  padding: 5px 0 0 2px;
`;

const ToolsetButton = styled.button<{ $on?: boolean }>`
  display: grid;
  place-items: center;
  width: 69px;
  height: 54px;
  border-radius: 10px;
  background: ${(p) => (p.$on ? "#b5b5b5" : "transparent")};
`;

const TOOLSETS: [string, React.ReactNode][] = [
  ["敷地計画", <Ico w={48} h={34}><path d="M10 2 H38 L46 31 H2 Z" fill="#9ddf9f" /><path d="M16 6 H26 V10 H33 V22 H26 V27 H13 Z" fill="#fff" /></Ico>],
  ["GIS", <Ico w={40} h={38}><circle cx="20" cy="19" r="17" fill="#9ccbe8" /><path d="M22 4 Q34 4 36 13 Q30 18 26 11 Z M14 15 Q24 14 24 21 Q20 25 20 31 Q15 24 13 19 Z M5 9 L12 5 L10 12 Z" fill={INK} stroke="none" /></Ico>],
  ["電気設備", <Ico w={40} h={34}><rect x="2" y="2" width="36" height="30" rx="3" fill="#cfcfcf" /><path d="M2 5 Q2 2 5 2 H20 V32 H5 Q2 32 2 29 Z" fill="#b0b0b0" strokeWidth={1.6} /><path d="M14 12 H26 M14 22 H26" strokeWidth={1.6} /><path d="M10 10 h4 v4 h-4z M10 20 h4 v4 h-4z M26 10 h4 v4 h-4z M26 20 h4 v4 h-4z" fill="#fff" strokeWidth={1.6} /></Ico>],
  ["建物", <Ico w={46} h={36}><path d="M3 14 L10 5 L24 2 L32 5 L43 14 V33 H3 Z" fill="#cf5f62" /><path d="M3 14 L11 4 L25 2 L14 15 Z" fill="#7d8080" /><rect x="25" y="19" width="11" height="14" fill="#4a4a4a" /><rect x="28" y="22" width="4" height="4" fill="#fff" strokeWidth={1} /><rect x="14" y="19" width="4" height="8" fill="#fff" /></Ico>],
  ["3Dモデリング", <Ico w={32} h={34}><path d="M2 2 H30 L26 17 L30 31 H2 L5 17 Z" fill="#e6f0f8" /><path d="M5 17 L13 12 L20 31 H2 Z" fill="#a8cbe6" stroke="none" /><path d="M2 2 Q8 20 18 31 M24 2 L4 24 M30 2 Q26 18 16 31" /></Ico>],
  ["ビジュアライズ", <Ico w={44} h={34}><path d="M2 10 H12 L16 3 H34 V8 L42 11 V31 H2 Z" fill="#bfbfbf" strokeWidth={2.5} /><path d="M2 24 H42 V31 H2 Z" fill="#555" /><circle cx="28" cy="20" r="11" fill="#ddd" /><circle cx="30" cy="20" r="6" fill="#c4c4c4" /><circle cx="30" cy="20" r="1.500" fill={INK} /></Ico>],
  ["家具/建物設備", <Ico w={40} h={36}><path d="M5 8 H36 V33 H29 Q22 26 16 33 H5 Z" fill="#eccb9b" /><path d="M2 2 H38 V8 H2 Z" fill="#dcb07c" /><path d="M12 8 V33 M24 12 V26 M20 19 H28" /></Ico>],
  ["寸法/注釈", <Ico w={52} h={24}><rect x="2" y="3" width="48" height="18" rx="3" fill="#f2d3ae" /><path d="M9 3 V21 M15 20 V14 M20 20 V16 M25 20 V14 M30 20 V16 M35 20 V14 M40 20 V16 M45 20 V14" /></Ico>],
  ["MEP", <Ico w={46} h={34}><path d="M15 2 H34 V8 H31 V13 H40 Q45 15 44 24 Q44 30 39 31 L32 27 H18 Q14 33 8 32 Q2 30 2 22 Q2 14 9 13 H18 V8 H15 Z" fill="#79b3e2" /><circle cx="9" cy="22" r="5" fill="#16324d" /><path d="M18 18 H34" stroke="#b9dbf5" strokeWidth={3} /></Ico>],
  ["詳細", <Ico w={46} h={30}><path d="M2 2 H44 V8 H40 V21 H44 V28 H2 V23 H6 V7 H2 Z" fill="#c2c2c2" /><path d="M12 8 H40 V21 H12 Z" fill="#9a9a9a" /><path d="M16 2 V8 M16 22 V28" /></Ico>],
  ["締結部品", <Ico w={46} h={28}><path d="M5 3 L2 14 L5 25 H16 L19 20 V8 L16 3 Z" fill="#d5d5d5" /><path d="M19 8 H40 L44 12 V16 L40 20 H19 Z" fill="#eee" /><path d="M10 3 V25 M27 8 L30 20 M32 8 L35 20 M37 8 L40 20" strokeWidth={1.7} /></Ico>],
  ["機械部品", (
    <Ico w={52} h={40}>
      <g transform="translate(26 13) scale(0.8)"><GearShape fill="#d8d8d8" hole="#fff" stroke={INK} /></g>
      <g transform="translate(0 0) scale(1.1)"><GearShape fill="#f5f5f5" hole="#fff" stroke={INK} /></g>
    </Ico>
  )],
];

/* attributes palette */

const Attr = styled.div`
  flex: 1;
  display: flex;
  flex-direction: column;
  gap: 10px;
  padding: 0 9px;
`;

const AttrHeading = styled.h3`
  display: flex;
  align-items: center;
  gap: 4px;
  flex: none;
  height: 67px;
  margin-bottom: -10px;
  color: #333;
  &:not(:first-child) { margin-top: -10px; }
  &::after {
    content: "";
    flex: 1;
    height: 2px;
    background: #cdcdcd;
  }
`;

const Combo = styled.div<{ $off?: boolean }>`
  display: grid;
  grid-template-columns: 1fr 29px;
  flex: 1;
  height: 48px;
  min-height: 48px;
  max-height: 48px;
  overflow: hidden;
  border: 2px solid #b3b3b3;
  border-radius: 6px;
  background: #fff;
  ${(p) => p.$off && css`opacity: 0.4; background: #f2f2f2;`}
`;

const ComboFace = styled.span<{ $dark?: boolean }>`
  display: flex;
  align-items: center;
  justify-content: space-between;
  gap: 12px;
  min-width: 0;
  padding: 0 8px 0 12px;
  color: #111;
  ${(p) => p.$dark && css`
    justify-content: flex-end;
    color: #fff;
    background: linear-gradient(90deg, #c9c9c9 0, #9a9a9a 8px, #3d3d3d 20px);
  `}
`;

const ComboValue = styled.span<{ $big?: boolean }>`
  ${(p) => (p.$big ? "font-size: 26px;" : "flex: 1; text-align: center;")}
`;

const Swatch = styled.span`
  width: 33px;
  height: 31px;
  border-radius: 3px;
  background: #2a2a2a;
`;

const Stroke = styled.span`
  flex: 1;
  height: 2px;
  background: #333;
`;

const ComboButton = styled.button`
  display: grid;
  place-items: center;
  border-left: 2px solid #a8a8a8;
  background: #cbcbcb;
`;

const Dots = () => (
  <Ico w={6} h={26}>
    <g fill="#111" stroke="none"><circle cx="3" cy="4" r="2.800" /><circle cx="3" cy="13" r="2.800" /><circle cx="3" cy="22" r="2.800" /></g>
  </Ico>
);

const ColorWell = styled.button<{ $c: string; $w?: number }>`
  flex: none;
  ${(p) => p.$w && `width: ${p.$w}px;`}
  height: 48px;
  border-radius: 6px;
  background: ${(p) => p.$c};
  border: 2px solid ${(p) => (p.$c === "#000" ? "#000" : "#b9b9b9")};
`;

const AttrRow = styled.div`
  display: flex;
  align-items: center;
  flex: none;
  height: 48px;
`;

const ShadowCheck = styled.label`
  flex: 1;
  display: flex;
  align-items: center;
  gap: 12px;
  padding-left: 8px;
`;

const CheckBox = styled.input`
  appearance: none;
  width: 27px;
  height: 27px;
  border-radius: 6px;
  background: #fff;
  border: 1px solid #d2d2d2;
`;

const DotsButton = styled.button`
  display: grid;
  place-items: center;
  width: 29px;
  height: 48px;
  margin-left: 4px;
  border: 2px solid #a8a8a8;
  border-radius: 6px;
  background: #cbcbcb;
`;

const ColorCombo = () => (
  <Combo>
    <ComboFace><Swatch /><ComboValue>カラー</ComboValue></ComboFace>
    <ComboButton aria-label="属性を選択"><Chevron /></ComboButton>
  </Combo>
);

const OpacityCombo = () => (
  <Combo>
    <ComboFace $dark><ComboValue $big>100%</ComboValue></ComboFace>
    <ComboButton aria-label="不透明度"><Dots /></ComboButton>
  </Combo>
);

const LeftColumn = () => (
  <Column>
    <Palette>
      <Head title="基本" />
      <ToolClip $h={541}>
        <ToolList $n={10} $h={556}>
          {BASIC.map((t) => (
            <li key={t.name}>
              <ToolButton><IconCell>{t.icon}</IconCell>{t.name}{t.more ? <Tri /> : <span />}</ToolButton>
            </li>
          ))}
        </ToolList>
      </ToolClip>
    </Palette>
    <Palette>
      <Head title="ツールセット" />
      <ToolClip $h={147}>
        <ToolList $n={3} $h={168}>
          {DIMS.map((t, i) => (
            <li key={t.name}><ToolButton $lead={67} $on={i === 0}><IconCell>{t.icon}</IconCell>{t.name}</ToolButton></li>
          ))}
        </ToolList>
      </ToolClip>
      <Toolsets>
        {TOOLSETS.map(([name, icon], i) => (
          <ToolsetButton key={name} aria-label={name} $on={i === 7}>{icon}</ToolsetButton>
        ))}
      </Toolsets>
    </Palette>
    <Palette $fill>
      <Head title="属性" help />
      <Attr>
        <AttrHeading>面の属性</AttrHeading>
        <ColorCombo />
        <ColorWell $c="#fff" aria-label="面の色" />
        <OpacityCombo />
        <AttrHeading>線の属性</AttrHeading>
        <ColorCombo />
        <ColorWell $c="#000" aria-label="線の色" />
        <OpacityCombo />
        <Combo>
          <ComboFace><Stroke /><ComboValue $big>0.05</ComboValue></ComboFace>
          <ComboButton aria-label="線の太さ"><Chevron /></ComboButton>
        </Combo>
        <AttrRow>
          <Combo $off><ComboFace><Stroke /></ComboFace><ComboButton disabled aria-label="始点マーカー"><Chevron /></ComboButton></Combo>
          <IconButton $w={41} aria-label="マーカーを連動">
            <Ico w={30} h={38}><path d="M9 12 Q8 3 16 3 Q24 4 22 14 M8 22 Q3 34 13 35 Q20 35 20 27 M14 13 V17 M15 22 V27" strokeWidth={3.5} /><path d="M3 5 L27 34" strokeWidth={3} /></Ico>
          </IconButton>
          <Combo $off><ComboFace><Stroke /></ComboFace><ComboButton disabled aria-label="終点マーカー"><Chevron /></ComboButton></Combo>
        </AttrRow>
        <AttrHeading>効果</AttrHeading>
        <AttrRow>
          <ShadowCheck><CheckBox type="checkbox" />シャドウ</ShadowCheck>
          <ColorWell $c="#000" $w={49} aria-label="シャドウの色" />
          <DotsButton aria-label="シャドウ設定"><Dots /></DotsButton>
        </AttrRow>
      </Attr>
    </Palette>
  </Column>
);

/* ---------- document area ---------- */

const Doc = styled.section`
  display: grid;
  grid-template-columns: 40px minmax(0, 1fr);
  grid-template-rows: 62px 39px minmax(0, 1fr);
  min-height: 0;
`;

const DocTabs = styled.div`
  grid-column: 1 / -1;
  display: flex;
  align-items: flex-end;
  font-size: 28px;
`;

const DocTab = styled.button<{ $on?: boolean }>`
  display: flex;
  align-items: center;
  gap: 12px;
  width: ${(p) => (p.$on ? 515 : 521)}px;
  height: 54px;
  padding-left: ${(p) => (p.$on ? 20 : 30)}px;
  border-radius: 10px 10px 0 0;
  font-weight: 500;
  color: ${(p) => (p.$on ? "#222" : "#000")};
  background: ${(p) => (p.$on ? "#e7e7e7" : "transparent")};
`;

const AddTab = styled.button`
  width: 56px;
  height: 54px;
  font-size: 30px;
`;

const RulerSvg = styled.svg`
  display: block;
  width: 100%;
  height: 100%;
  background: #fcfdf8;
  font: 24px "Liberation Sans", sans-serif;
  & text { fill: #000; stroke: #000; stroke-width: 0.5; }
`;

const Paper = styled.svg`
  display: block;
  width: 100%;
  height: 100%;
  background: #f7f8f0;
  font-family: "Liberation Sans", "Noto Sans CJK JP", sans-serif;
`;

const UNIT = 148;
const H_ZERO = 2057 - 444;
const V_FIRST = 511 - 498;

const range = (a: number, b: number) => Array.from({ length: b - a + 1 }, (_, i) => a + i);

const HRuler = () => (
  <RulerSvg>
    <rect x="374" width="14" height="39" fill="#f3f76b" />
    {range(-11, 8).map((n) => {
      const x = H_ZERO + n * UNIT;
      return (
        <g key={n}>
          <path
            d={`M${x} 0 V39` + range(1, 9).map((i) => `M${Math.round(x + i * 14.8)} ${i === 5 ? 26 : 32} V39`).join("")}
            stroke="#111" strokeWidth={1.5}
          />
          {n > -11 && <text x={x + 9} y="22">{Math.abs(n) * 1000}</text>}
        </g>
      );
    })}
    <text x="8" y="22">1000</text>
    <path d="M1 0 V39" stroke="#111" strokeWidth={2} />
    <path d="M381 0 V39" stroke="#222" strokeWidth={2} />
    <path d="M0 38 H6000" stroke="#111" strokeWidth={2} />
    <path d="M0 0 H6000" stroke="#999" strokeWidth={1} />
  </RulerSvg>
);

const VRuler = () => (
  <RulerSvg>
    <rect y="596" width="40" height="15" fill="#f3f76b" />
    {range(0, 12).map((n) => {
      const y = V_FIRST + n * UNIT;
      return (
        <g key={n}>
          <path
            d={`M0 ${y} H40` + range(1, 9).map((i) => `M${i === 5 ? 27 : 33} ${Math.round(y - i * 14.8)} H40`).join("")}
            stroke="#111" strokeWidth={1.5}
          />
          {n > 0 && <text transform={`translate(23 ${y - 8}) rotate(-90)`}>{(10 + n) * 1000}</text>}
        </g>
      );
    })}
    <path d="M0 603 H40" stroke="#222" strokeWidth={2} />
    <path d="M39 0 V4000" stroke="#111" strokeWidth={2} />
  </RulerSvg>
);

const DimText = ({ x, y, v, children }: { x: number; y: number; v?: boolean; children: React.ReactNode }) => (
  <text textAnchor="middle" fontSize={72} fill="#000" transform={`translate(${x} ${y})${v ? " rotate(-90)" : ""}`}>
    {children}
  </text>
);

const HANDLES = [[1302, 955], [1975, 955], [2379, 955], [2379, 1224], [1302, 1628], [2513, 1628]];

const Drawing = () => (
  <Paper role="img" aria-label="図面">
    <g transform="translate(-444 -498)">
      <g stroke="#000" strokeWidth={6} fill="#fff" strokeLinejoin="round">
        <path d="M1302 955 H1975 V1628 H1302 Z" />
        <path d="M1975 955 H2379 V1224 H1975 Z" />
        <path d="M1975 1224 H2513 V1628 H1975 Z" />
      </g>
      <g fill="none" stroke="#55b852" strokeWidth={1.5}>
        {HANDLES.map(([x, y]) => <rect key={`${x}-${y}`} x={x - 10} y={y - 10} width={20} height={20} />)}
      </g>

      <g fill="none" stroke="#111" strokeWidth={1.5}>
        <path d="M1279 660 H2402 M1302 613 V931 M1975 613 V931 M2379 613 V931" />
        <path d="M1057 955 V1628 M1057 955 H1205 M1057 1628 H1205" />
        <path d="M2803 931 V1651 M2403 955 H2850 M2516 1224 H2850 M2537 1628 H2850" />
      </g>
      <g stroke="#000" strokeWidth={2.5}>
        <path d="M1285 677 L1319 643 M1958 677 L1992 643 M2362 677 L2396 643" />
        <path d="M2786 938 L2820 972 M2786 1207 L2820 1241 M2786 1611 L2820 1645" />
      </g>
      <circle cx="1057" cy="955" r="9" /><circle cx="1057" cy="1628" r="9" />

      <g fill="#fff">
        <rect x="1556" y="543" width="166" height="94" />
        <rect x="2093" y="543" width="166" height="94" />
        <rect x="854" y="1209" width="94" height="167" />
        <rect x="948" y="1197" width="96" height="191" />
        <rect x="2684" y="1006" width="96" height="167" />
        <rect x="2684" y="1342" width="96" height="167" />
      </g>
      <DimText x={1638} y={599}>4550</DimText>
      <DimText x={2175} y={599}>2730</DimText>
      <DimText v x={911} y={1292}>4550</DimText>
      <DimText v x={1004} y={1292}>[15<tspan fontSize={62}>尺</tspan>]</DimText>
      <DimText v x={2741} y={1090}>1820</DimText>
      <DimText v x={2741} y={1426}>2730</DimText>

      <path d="M1302 1747 V1894 H2513 V1747" fill="none" stroke="#f6bd78" strokeWidth={7} />
      <path d="M1302 1747 V1894 H2513 V1747" fill="none" stroke="#a8651c" strokeWidth={2} />
      {[1302, 2513].map((x) => (
        <g key={x}><circle cx={x} cy="1894" r="9" fill="#b8670c" stroke="#f09a3a" strokeWidth={2} /><circle cx={x} cy="1894" r="3" fill="#5a3208" /></g>
      ))}
      <rect x="2502" y="1883" width="23" height="23" fill="none" stroke="#d9503c" strokeWidth={1.5} />
      <rect x="1813" y="1691" width="189" height="188" rx="2" fill="#fff" stroke="#f8cd95" strokeWidth={7} />
      <DimText x={1907} y={1748}>8190</DimText>
      <DimText x={1907} y={1842}>[27<tspan fontSize={62}>尺</tspan>]</DimText>

      <path d="M818 1102 H829 M823.500 1096 V1108" stroke="#222" strokeWidth={2.5} />

      <rect x="508" y="1863" width="136" height="137" fill="#cfe6f5" stroke="#8fcdf7" strokeWidth={3} />
      <path d="M509 1864 H540 L509 1898 Z M643 1864 V1898 L612 1864 Z M509 1999 V1965 L540 1999 Z M643 1999 H612 L643 1965 Z" fill="#98d2fb" />
      <path d="M498 1846 V2009" stroke="#3fa846" strokeWidth={3.5} />
      <path d="M498 2009 H661" stroke="#b32a1a" strokeWidth={3.5} />
      <rect x="542" y="1874" width="72" height="31" rx="15" fill="#eef7fd" />
      <rect x="522" y="1917" width="110" height="30" rx="15" fill="#eef7fd" />
      <circle cx="555" cy="1889" r="12" fill="#0a25ff" />
      <g fontSize={20} fontWeight={700} fill="#1c32c8" textAnchor="middle">
        <text x="587" y="1897">2D</text>
        <text x="577" y="1939">2D/平面</text>
        <text x="499" y="1834" fill="#2faf38">Y</text>
        <text x="683" y="2017" fill="#c4302b">X</text>
      </g>
    </g>
  </Paper>
);

const Document = () => (
  <Doc>
    <DocTabs>
      <DocTab><CloseIcon color="#111" />名称未設定 1</DocTab>
      <DocTab $on><CloseIcon />名称未設定 3</DocTab>
      <AddTab aria-label="新規タブ">+</AddTab>
    </DocTabs>
    <RulerSvg>
      <rect x="10" y="9" width="21" height="21" rx="5" fill="none" stroke="#111" strokeWidth={3} />
      <path d="M20.500 0 V8 M20.500 31 V39 M0 19.500 H9 M32 19.500 H40" stroke="#111" strokeWidth={3} />
    </RulerSvg>
    <HRuler />
    <VRuler />
    <Drawing />
  </Doc>
);

/* ---------- right palettes ---------- */

const TabStrip = styled.div`
  flex: none;
  display: flex;
  align-items: flex-end;
  height: 65px;
  padding-left: 9px;
  background: #b7b7b7;
`;

const Tab = styled.button<{ $w: number; $on?: boolean; $mark?: boolean }>`
  position: relative;
  display: flex;
  align-items: center;
  justify-content: flex-start;
  gap: 12px;
  width: ${(p) => p.$w}px;
  height: 57px;
  padding-left: ${(p) => (p.$on && p.$w > 100 ? 13 : 8)}px;
  border-radius: 10px 10px 0 0;
  background: ${(p) => (p.$on ? "#e7e7e7" : "transparent")};
  ${(p) => p.$mark && css`
    &::after {
      content: "";
      position: absolute;
      right: 0;
      top: 9px;
      width: 2px;
      height: 39px;
      background: #555;
    }
  `}
`;

const InfoScroll = styled.div`
  height: 505px;
  overflow: hidden;
  padding: 0 14px 0 9px;
`;

const InfoTitle = styled.h3`
  height: 55px;
  margin: 0 -14px 0 -9px;
  padding-left: 9px;
  line-height: 54px;
  font-weight: 700;
  border-bottom: 1px solid #d8d8d8;
`;

const Field = styled.div<{ $h: number; $label: number; $right?: boolean; $gap?: number }>`
  display: grid;
  grid-template-columns: ${(p) => p.$label}px minmax(0, 1fr);
  column-gap: ${(p) => p.$gap ?? 18}px;
  align-items: center;
  height: ${(p) => p.$h}px;
  padding: 0 4px 0 ${(p) => (p.$right ? 0 : 9)}px;
  & > label { text-align: ${(p) => (p.$right ? "right" : "left")}; white-space: nowrap; }
`;

const LengthBox = styled.div`
  display: flex;
  align-items: center;
  gap: 16px;
  height: 117px;
  margin: 9px 0 4px 4px;
  padding: 0 20px 0 18px;
  border: 2px solid #d6d6d6;
  border-radius: 10px;
  background: #dddddd;
`;

const NameRow = styled.div`
  display: grid;
  grid-template-columns: 65px 1fr;
  align-items: center;
  height: 53px;
  padding: 0 7px 0 6px;
`;

const OptionRow = styled.div`
  display: grid;
  grid-template-columns: 192px minmax(0, 1fr);
  align-items: center;
  height: 40px;
  padding: 0 5px 0 11px;
  white-space: nowrap;
`;

const Options = styled.div`
  flex: none;
  padding: 3px 0 9px;
`;

const Search = styled.label`
  display: flex;
  align-items: center;
  gap: 17px;
  height: 36px;
  margin: 7px 7px 0 6px;
  padding-left: 16px;
  border-radius: 8px;
  background: #fff;
  box-shadow: 0 1px 2px rgba(0, 0, 0, 0.35);
`;

const SearchInput = styled.input`
  flex: 1;
  &::placeholder { color: #b5b5b5; opacity: 1; }
`;

const SearchIcon = ({ c = INK }: { c?: string }) => (
  <Ico w={26} h={28}><circle cx="11" cy="12" r="9" stroke={c} strokeWidth={2.5} /><path d="M18 19 L25 27" stroke={c} strokeWidth={3} /></Ico>
);

const line = "linear-gradient(#cfcfcf, #cfcfcf)";
const ClassArea = styled.div`
  flex: 1;
  min-height: 0;
  margin: 0 2px 0 1px;
  background: ${line} 5px 63px / 1px 100% no-repeat, ${line} 36px 63px / 1px 100% no-repeat,
    ${line} 68px 63px / 1px 100% no-repeat, ${line} 101px 63px / 1px 100% no-repeat, #fff;
`;

const ClassTable = styled.table`
  width: 100%;
  table-layout: fixed;
  border-collapse: collapse;
  th { height: 61px; padding: 0 0 0 13px; font-weight: 400; text-align: left; border-bottom: 2px solid #dcdcdc; white-space: nowrap; }
  td { height: 36px; padding: 0; line-height: 36px; color: #000; }
`;

const HeadCell = styled.span`
  display: block;
  margin-left: -13px;
  padding-left: 13px;
  height: 34px;
  line-height: 34px;
  border-right: 2px solid #d8d8d8;
`;

const NameCell = styled.td<{ $bold?: boolean }>`
  && { padding-left: 34px; font-weight: ${(p) => (p.$bold ? 700 : 400)}; }
`;

const Eye = () => (
  <Ico w={36} h={24}><path d="M3 12 Q18 -8 33 12 Q18 32 3 12 Z" fill="#ddd" strokeWidth={2.5} /><circle cx="18" cy="12" r="6" fill={INK} /></Ico>
);

const CheckCell = styled.td`
  && { padding-left: 12px; }
`;

const RightColumn = () => (
  <Column>
    <Palette>
      <Head title="オブジェクト情報 - 形状" help />
      <TabStrip>
        <Tab $w={166} $on>
          <Ico w={38} h={32}><path d="M12 8 V4 H34 V26 H26" strokeWidth={3} /><circle cx="13" cy="19" r="10" strokeWidth={3} /></Ico>形状
        </Tab>
        <Tab $w={164} $mark>
          <Ico w={40} h={32}><path d="M6 3 H34 Q38 3 38 8 V28 H31 Q31 24 28 24 H26 V28 H14 V24 H12 Q9 24 9 28 H2 V8 Q2 3 6 3 Z M13 14 H27" strokeWidth={3} fill="#d0d0d0" /></Ico>データ
        </Tab>
        <Tab $w={165} $mark><Teapot />レンダー</Tab>
      </TabStrip>
      <InfoScroll>
        <InfoTitle>寸法線</InfoTitle>
        <Field $h={58} $label={82} $right>
          <label htmlFor="info-class">クラス:</label><Pick id="info-class" value="寸法" />
        </Field>
        <Field $h={56} $label={82} $right>
          <label htmlFor="info-layer">レイヤ:</label><Pick id="info-layer" value="レイヤ-6" />
        </Field>
        <Field $h={60} $label={82} $right>
          <label htmlFor="info-plane">基準面:</label><Pick id="info-plane" value="レイヤ" kind="blue" />
        </Field>
        <LengthBox>
          <Ico w={94} h={16}>
            <path d="M2 8 H92" /><rect x="1" y="2" width="12" height="12" fill="#000" stroke="#000" />
            <rect x="41" y="2" width="11" height="12" fill="#ddd" stroke="#000" strokeWidth={2.5} /><rect x="81" y="2" width="11" height="12" fill="#ddd" stroke="#000" strokeWidth={2.5} />
          </Ico>
          <label htmlFor="info-length">長さ:</label>
          <PlainInput id="info-length" defaultValue="8190" />
        </LengthBox>
        <Field $h={60} $label={157} $gap={0}>
          <label htmlFor="info-unit">単位:</label><Pick id="info-unit" value="ファイルの単位" kind="blue" />
        </Field>
        <Field $h={60} $label={157} $gap={0}>
          <label htmlFor="info-standard">寸法規格:</label><Pick id="info-standard" value="1" kind="blue" />
        </Field>
        <Field $h={60} $label={157} $gap={3}>
          <label htmlFor="info-offset">オフセット:</label><PlainInput id="info-offset" defaultValue="-1801.97" />
        </Field>
      </InfoScroll>
      <NameRow>
        <label htmlFor="info-name">名前:</label><PlainInput id="info-name" $h={38} />
      </NameRow>
    </Palette>

    <Palette $fill>
      <Head title="ナビゲーション - クラス" help />
      <TabStrip>
        <Tab $w={62} $on aria-label="クラス">
          <Ico w={44} h={36}>
            <circle cx="22" cy="15" r="6" strokeWidth={3} /><circle cx="38" cy="7" r="4" strokeWidth={2.5} /><circle cx="7" cy="24" r="4" strokeWidth={2.5} />
            <circle cx="37" cy="25" r="4" strokeWidth={2.5} /><circle cx="20" cy="31" r="4" strokeWidth={2.5} />
            <path d="M29 12 L33 10 M12 21 L16 19 M28 19 L33 22" strokeDasharray="2 2" />
          </Ico>
        </Tab>
        <Tab $w={60} $mark aria-label="レイヤ">
          <Ico w={40} h={38}><path d="M20 2 L36 11 L20 20 L4 11 Z" fill="#e6e6e6" /><path d="M3 19 L20 29 L37 19 M3 26 L20 36 L37 26" strokeWidth={4} /></Ico>
        </Tab>
        <Tab $w={60} $mark aria-label="シートレイヤ">
          <Ico w={44} h={38}><rect x="2" y="2" width="40" height="34" fill="#d8d8d8" strokeWidth={3} /><path d="M8 8 H36 V26 H29 V29 H8 Z" fill="#bfbfbf" strokeWidth={3} /></Ico>
        </Tab>
        <Tab $w={60} $mark aria-label="ビューポート">
          <Ico w={42} h={38}><path d="M2 10 V3 H10 M32 3 H40 V10 M2 28 V35 H10 M32 35 H40 V28" strokeWidth={3} /><path d="M8 29 V21 L16 6 L21 14 L25 10 L34 22 V29 Z" fill="#e0e0e0" strokeWidth={2.500} /></Ico>
        </Tab>
        <Tab $w={60} $mark aria-label="登録画面">
          <Ico w={46} h={38}><path d="M24 36 H3 V2 H20 L31 14 V18 M20 2 V14 H31" strokeWidth={2.8} fill="#dcdcdc" /><path d="M18 26 Q31 10 44 26 Q31 42 18 26 Z" fill={INK} /><circle cx="31" cy="26" r="4" fill="#fff" stroke="none" /></Ico>
        </Tab>
        <Tab $w={60} $mark aria-label="参照">
          <Ico w={44} h={38}><path d="M14 2 H30 L41 13 V35 H14 Z M30 2 V13 H41" strokeWidth={2.800} fill="#dcdcdc" /><path d="M14 36 Q0 34 2 22 Q4 12 15 13 V6 L29 18 L15 30 V22 Q10 26 14 36 Z" fill="#f0f0f0" strokeWidth={2.500} /></Ico>
        </Tab>
      </TabStrip>
      <Options>
        <OptionRow><label htmlFor="nav-option">クラスオプション:</label><Pick id="nav-option" value="ほかを表示/スナップ/編集" kind="updown" /></OptionRow>
        <OptionRow><label htmlFor="nav-filter">フィルタ:</label><Pick id="nav-filter" value="<すべてのクラス>" kind="updown" /></OptionRow>
        <Search><SearchIcon /><SearchInput type="text" aria-label="検索" placeholder="検索" /></Search>
      </Options>
      <ClassArea>
        <ClassTable>
          <colgroup><col width="105" /><col width="56" /><col /></colgroup>
          <thead>
            <tr><th><HeadCell>表示⋯</HeadCell></th><th aria-label="アクティブ"><HeadCell /></th><th>クラス名</th></tr>
          </thead>
          <tbody>
            <tr>
              <td><Eye /></td>
              <CheckCell><Ico w={34} h={24}><path d="M2 13 L11 22 L31 2" stroke="#000" strokeWidth={3.5} /></Ico></CheckCell>
              <NameCell $bold>一般</NameCell>
            </tr>
            <tr><td><Eye /></td><td /><NameCell>寸法</NameCell></tr>
          </tbody>
        </ClassTable>
      </ClassArea>
    </Palette>
  </Column>
);

/* ---------- status bar ---------- */

const StatusBar = styled.footer`
  flex: none;
  display: flex;
  align-items: center;
  height: 55px;
  padding-left: 14px;
  color: #333;
`;

const Hint = styled.span`
  flex: 1;
  white-space: pre;
  & b { margin: 0 3px; }
`;

const Coord = styled.span<{ $w: number }>`
  width: ${(p) => p.$w}px;
  font-size: 25px;
`;

const GapChevron = styled.span`
  margin-left: 6px;
`;

export default function App() {
  return (
    <>
      <Global />
      <Screen>
        <MenuBar>
          <Apple />
          <MenuItem $app>Vectorworks</MenuItem>
          {MENUS.map((m) => <MenuItem key={m}>{m}</MenuItem>)}
        </MenuBar>
        <Window>
          <TitleBar>
            <Lights>
              <Light $c="#ff5049" aria-label="閉じる" />
              <Light $c="#fdb42a" aria-label="しまう" />
              <Light $c="#27c138" aria-label="拡大" />
            </Lights>
            <AppTitle>Vectorworks Design Suite 2025</AppTitle>
            <TitleTools>
              <IconButton $w={72} aria-label="ホーム">
                <Ico w={42} h={38}>
                  <path d="M6 18 L19 5 L32 18 V35 H24 V24 H14 V35 H6 Z" strokeWidth={2.5} /><circle cx="31" cy="11" r="10" fill="#d31515" stroke="none" />
                </Ico>
              </IconButton>
              <IconButton $w={64} aria-label="検索"><SearchIcon c="#444" /></IconButton>
              <IconButton $w={124} aria-label="設定"><Gear s={34} fill="none" hole="none" stroke="#444" /><GapChevron><Chevron w={20} /></GapChevron></IconButton>
            </TitleTools>
            <SignIn>
              <Ico w={28} h={34}><circle cx="14" cy="9" r="7" stroke="#444" strokeWidth={2.4} /><path d="M2 31 Q1 19 14 19 Q27 19 26 31 Q14 34 2 31 Z" stroke="#444" strokeWidth={2.4} /></Ico>
              サインイン
            </SignIn>
          </TitleBar>
          <ToolbarView />
          <ModeBarView />
          <Workspace>
            <LeftColumn />
            <Document />
            <RightColumn />
          </Workspace>
          <StatusBar>
            <Hint>縦横寸法 ツール  <b>N:</b>  標準寸法 モード</Hint>
            <Coord $w={361}>X: -8330</Coord>
            <Coord $w={369}>Y: -13990</Coord>
          </StatusBar>
          <Floating>
            <IconButton aria-label="閉じる"><CloseIcon /></IconButton>
            <Ico w={20} h={6}><path d="M0 3 H20" stroke="#4a4a4a" strokeWidth={4.5} /></Ico>
            <FloatingTitle>リソースマネージャ</FloatingTitle>
            <Help>?</Help>
          </Floating>
        </Window>
      </Screen>
    </>
  );
}
